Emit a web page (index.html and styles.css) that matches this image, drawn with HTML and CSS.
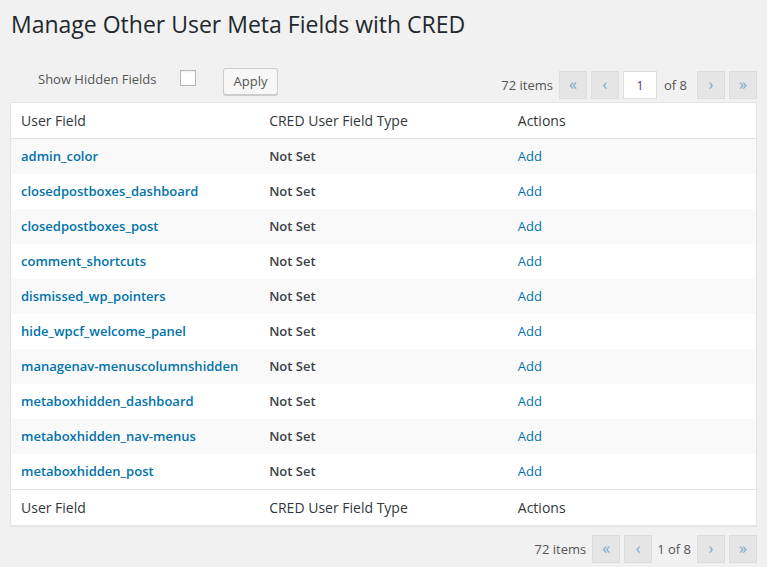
FILE: index.html
```html
<!DOCTYPE html>
<html>
<head>
<meta charset="utf-8">
<link rel="stylesheet" href="styles.css">
</head>
<body>
<div class="wrap">
  <h1 class="title">Manage Other User Meta Fields with CRED</h1>
  <div class="tablenav top">
    <div class="filters">
      <span class="label">Show Hidden Fields</span>
      <span class="checkbox"></span>
      <span class="button">Apply</span>
    </div>
    <div class="pages">
      <span class="count">72 items</span>
      <span class="pbtn">«</span>
      <span class="pbtn">‹</span>
      <span class="pinput">1</span>
      <span class="of">of 8</span>
      <span class="pbtn">›</span>
      <span class="pbtn">»</span>
    </div>
  </div>
  <table class="list">
    <thead>
      <tr><th>User Field</th><th>CRED User Field Type</th><th>Actions</th></tr>
    </thead>
    <tbody>
      <tr><td><a class="field">admin_color</a></td><td class="type">Not Set</td><td><a class="act">Add</a></td></tr>
      <tr><td><a class="field">closedpostboxes_dashboard</a></td><td class="type">Not Set</td><td><a class="act">Add</a></td></tr>
      <tr><td><a class="field">closedpostboxes_post</a></td><td class="type">Not Set</td><td><a class="act">Add</a></td></tr>
      <tr><td><a class="field">comment_shortcuts</a></td><td class="type">Not Set</td><td><a class="act">Add</a></td></tr>
      <tr><td><a class="field">dismissed_wp_pointers</a></td><td class="type">Not Set</td><td><a class="act">Add</a></td></tr>
      <tr><td><a class="field">hide_wpcf_welcome_panel</a></td><td class="type">Not Set</td><td><a class="act">Add</a></td></tr>
      <tr><td><a class="field">managenav-menuscolumnshidden</a></td><td class="type">Not Set</td><td><a class="act">Add</a></td></tr>
      <tr><td><a class="field">metaboxhidden_dashboard</a></td><td class="type">Not Set</td><td><a class="act">Add</a></td></tr>
      <tr><td><a class="field">metaboxhidden_nav-menus</a></td><td class="type">Not Set</td><td><a class="act">Add</a></td></tr>
      <tr><td><a class="field">metaboxhidden_post</a></td><td class="type">Not Set</td><td><a class="act">Add</a></td></tr>
    </tbody>
    <tfoot>
      <tr><th>User Field</th><th>CRED User Field Type</th><th>Actions</th></tr>
    </tfoot>
  </table>
  <div class="tablenav bottom">
    <div class="pages">
      <span class="count">72 items</span>
      <span class="pbtn">«</span>
      <span class="pbtn">‹</span>
      <span class="of">1 of 8</span>
      <span class="pbtn">›</span>
      <span class="pbtn">»</span>
    </div>
  </div>
</div>
</body>
</html>
```

FILE: styles.css
```css
html, body {
  margin: 0;
  padding: 0;
  background: #f1f1f1;
}
body {
  font-family: "Open Sans", "Liberation Sans", sans-serif;
  font-size: 13px;
  color: #444;
}
.wrap {
  padding: 9px 10px 0 10px;
}
.title {
  margin: 0 0 0 1px;
  font-size: 23px;
  font-weight: 400;
  line-height: 31px;
  color: #23282d;
}
.tablenav {
  display: flex;
  justify-content: space-between;
}
.tablenav.top {
  margin-top: 28px;
  height: 34px;
  align-items: flex-start;
}
.tablenav.top .pages {
  margin-top: 3px;
}
.tablenav.bottom {
  margin-top: 9px;
  justify-content: flex-end;
}
.filters {
  display: flex;
  align-items: flex-start;
  padding-left: 28px;
}
.label {
  color: #555;
  font-size: 13px;
  line-height: 18px;
  margin-top: 2px;
}
.checkbox {
  width: 14px;
  height: 14px;
  border: 1px solid #b4b9be;
  background: #fff;
  margin-left: 23px;
  margin-top: 2px;
  box-shadow: inset 0 1px 2px rgba(0,0,0,.07);
}
.button {
  margin-left: 27px;
  height: 25px;
  line-height: 25px;
  padding: 0 10px;
  border: 1px solid #ccc;
  border-radius: 3px;
  background: #f7f7f7;
  box-shadow: 0 1px 0 #ccc;
  color: #555;
  font-size: 13px;
}
.pages {
  display: flex;
  align-items: center;
  height: 28px;
}
.count {
  color: #555;
  margin-right: 2px;
}
.pbtn {
  box-sizing: border-box;
  width: 28px;
  height: 28px;
  line-height: 25px;
  text-align: center;
  background: #e5e5e5;
  border: 1px solid #ddd;
  color: #7aaad0;
  font-size: 16px;
  margin-left: 4px;
}
.pinput {
  box-sizing: border-box;
  width: 34px;
  height: 28px;
  line-height: 26px;
  text-align: center;
  background: #fff;
  border: 1px solid #ddd;
  color: #5c3d80;
  margin-left: 4px;
}
.of {
  color: #555;
  margin: 0 6px 0 7px;
}
.bottom .of {
  margin: 0 2px 0 5px;
}
.list {
  width: 747px;
  border-collapse: collapse;
  background: #fff;
  border: 1px solid #e5e5e5;
  box-shadow: 0 1px 1px rgba(0,0,0,.04);
  table-layout: fixed;
}
.list th {
  text-align: left;
  font-weight: 400;
  font-size: 14px;
  color: #32373c;
  padding: 0 10px;
  height: 35px;
}
.list thead th {
  border-bottom: 1px solid #e1e1e1;
}
.list tfoot th {
  border-top: 1px solid #e1e1e1;
}
.list td {
  padding: 0 10px 2px;
  height: 33px;
}
.list tbody tr:nth-child(odd) {
  background: #f9f9f9;
}
.field {
  color: #0073aa;
  font-weight: 600;
}
.type {
  font-weight: 600;
  color: #3c4147;
}
.act {
  color: #0073aa;
}
```
